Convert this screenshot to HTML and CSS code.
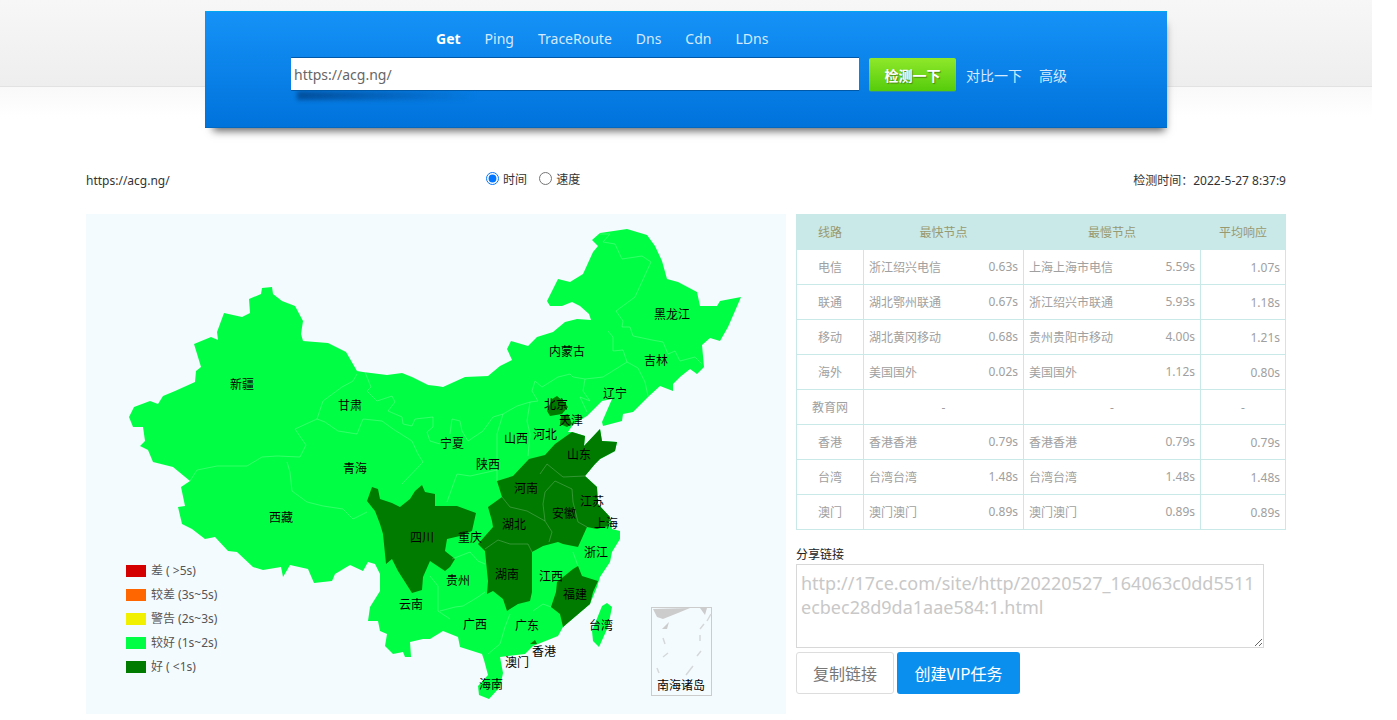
FILE: index.html

```html
<!DOCTYPE html>
<html lang="zh-CN">
<head>
  <meta charset="UTF-8" />
  <title>网站测速</title>
  <link rel="stylesheet" href="styles.css">
</head>
<body>
<div class="page">
  <div class="head">
    <div class="panel">
      <div class="nav">
        <a class="on">Get</a>
        <a>Ping</a>
        <a>TraceRoute</a>
        <a>Dns</a>
        <a>Cdn</a>
        <a>LDns</a>
      </div>
      <div class="search">
        <div class="url-box"><input class="url" type="text" value="https://acg.ng/"></div>
        <button class="go">检测一下</button>
        <a class="link first">对比一下</a>
        <a class="link">高级</a>
      </div>
    </div>
  </div>

  <div class="main">
    <div class="wrap">
      <div class="meta">
        <span class="site">https://acg.ng/</span>
        <div class="mode">
          <label><input type="radio" name="mode" checked> 时间</label>
          <label><input type="radio" name="mode"> 速度</label>
        </div>
        <span class="when">检测时间：2022-5-27 8:37:9</span>
      </div>

      <div class="cols">
        <div class="map">
          <svg class="china" viewBox="86 214 700 500" width="700" height="500">
            <!-- 整体轮廓 -->
            <path class="ok" d="M262 288 272 287 273 294 282 301 295 306 303 321 301 334 303 341 328 343 346 352 357 371 363 372 387 375 402 373 412 377 428 385 437 386 443 387 465 377 488 376 500 366 512 360 507 349 511 341 528 346 537 337 553 332 565 322 577 319 591 320 589 314 580 306 572 302 562 306 550 306 547 301 558 279 570 282 583 274 593 252 598 246 592 240 600 233 627 229 647 235 655 246 662 261 667 279 678 282 697 292 700 306 717 306 720 301 741 297 735 311 728 327 720 341 710 338 702 345 704 367 697 374 690 369 680 377 673 384 673 391 660 386 648 397 633 412 623 414 622 421 603 426 602 422 612 399 602 401 587 416 577 422 572 426 568 432 572 432 585 436 584 446 600 429 602 441 617 442 615 451 600 459 595 464 585 476 597 487 598 504 610 517 612 529 620 531 620 539 612 552 610 562 600 577 597 587 590 604 563 627 558 636 533 646 525 654 500 657 503 673 498 676 488 675 484 660 482 654 460 647 458 637 443 631 430 639 423 639 410 642 411 657 405 657 403 652 393 654 385 646 387 634 380 631 378 621 368 621 370 607 380 591 380 574 375 564 368 562 363 571 350 565 335 574 332 581 314 583 308 569 290 565 283 577 281 567 263 570 253 567 237 552 228 551 215 537 205 539 192 529 182 524 178 507 185 506 181 487 190 481 173 467 153 462 148 450 140 446 145 441 143 427 133 427 129 417 134 407 150 401 158 404 163 396 175 391 195 382 196 371 201 367 194 344 211 337 218 340 217 332 224 313 242 317 250 313 249 299 261 294Z"/>
            <path class="ok" d="M478 686 488 675 503 673 500 687 489 699 479 695Z"/>
            <path class="ok" d="M592 631 602 606 607 603 612 607 608 627 599 647 593 641Z"/>
            <!-- <1s 的省份 -->
            <path class="good" d="M367 501 372 487 378 489 380 499 392 503 400 507 410 499 415 491 422 485 425 492 435 494 435 506 457 506 476 513 472 531 460 536 447 539 445 551 455 559 450 567 445 571 430 561 423 577 422 590 412 593 398 571 392 559 386 564 383 534 380 524 375 511Z"/>
            <path class="good" d="M529 459 545 455 555 444 572 432 585 436 584 446 600 429 602 441 617 442 615 451 600 459 595 464 585 476 597 487 598 504 610 517 608 526 597 529 587 527 578 547 563 544 558 542 543 546 532 552 532 592 530 601 518 604 507 611 503 599 493 591 487 594 488 581 485 551 478 544 493 527 492 521 488 507 502 497 497 481 513 476Z"/>
            <path class="good" d="M551 607 556 592 557 582 573 569 578 566 582 576 598 581 593 592 590 604 563 627 560 614Z"/>
            <path class="good" d="M547 411 552 399 557 396 563 401 568 407 562 414 550 416Z"/>
            <path class="good" d="M561 416 568 414 572 424 567 427 560 424Z"/>
            <path class="good" d="M530 644 535 640 537 644Z"/>
            <!-- 省界 -->
            <g class="lines">
              <polyline points="190,481 197,470 217,466 247,466 262,457 277,456 300,457 306,445 295,429 317,419 323,401 342,387 353,381 357,374"/>
              <polyline points="287,462 290,472 292,491 307,502 323,506 343,509 353,519 367,512"/>
              <polyline points="365,372 371,387 367,391 377,401 392,396 395,402 388,411 402,417 403,424 412,426 415,419 433,417 433,427 427,432 430,441 440,444"/>
              <polyline points="317,419 325,422 338,431 357,434 363,419 382,421 393,429 412,441 418,454 423,462 402,484"/>
              <polyline points="600,234 610,234 603,242 615,244 622,259 642,256 651,262 640,286 635,297 616,311 623,321 622,327"/>
              <polyline points="608,331 613,337 613,351 623,350 627,362 638,368 645,382 648,396"/>
              <polyline points="622,327 630,327 633,336 652,340 663,342 668,354 675,351 680,361 695,357 702,364"/>
              <polyline points="627,362 603,377 585,379 583,391 590,401 580,397 587,412"/>
              <polyline points="585,379 573,377 570,374 558,377 542,387 535,381 532,391 538,401 530,402 517,406 503,414 493,417 483,431 468,441 462,431 460,421 452,419 450,434"/>
              <polyline points="530,402 527,421 530,434 528,456"/>
              <polyline points="503,414 497,434 497,461 497,481"/>
              <polyline points="447,502 457,474 470,476 497,470"/>
              <polyline points="452,559 470,552 478,561 485,564"/>
              <polyline points="430,576 438,586 438,611 450,619"/>
              <polyline points="440,611 455,607 463,606 478,597 485,592"/>
              <polyline points="510,614 505,627 500,644 488,654"/>
              <polyline points="533,611 543,604 551,607"/>
              <polyline points="573,552 578,566"/>
              <polyline points="502,497 510,507 527,511 545,521 552,532 549,542"/>
              <polyline points="545,521 543,504 545,492 555,481 572,489 573,502 578,522 587,527"/>
              <polyline points="540,474 547,464 563,477 585,476"/>
              <polyline points="485,549 498,540 510,544 518,544 528,544 532,552"/>
            </g>
            <!-- 南海诸岛 -->
            <rect class="inset" x="651.5" y="607.5" width="60" height="88"/>
            <path class="isle" d="M653 609 690 608 678 613 663 619 657 617Z"/>
            <path class="isle" d="M700 608 707 608 705 615Z"/>
            <path class="isle" d="M662 629 669 622 667 629Z"/>
            <g class="dash">
              <line x1="707" y1="621" x2="711" y2="614"/>
              <line x1="700" y1="629" x2="704" y2="624"/>
              <line x1="700" y1="635" x2="700" y2="641"/>
              <line x1="697" y1="656" x2="701" y2="651"/>
              <line x1="686" y1="675" x2="693" y2="666"/>
              <line x1="663" y1="638" x2="665" y2="644"/>
              <line x1="663" y1="657" x2="668" y2="653"/>
              <line x1="657" y1="668" x2="659" y2="673"/>
            </g>
            <g class="names">
              <text x="242" y="389">新疆</text>
              <text x="350" y="410">甘肃</text>
              <text x="355" y="473">青海</text>
              <text x="281" y="522">西藏</text>
              <text x="422" y="542">四川</text>
              <text x="411" y="609">云南</text>
              <text x="672" y="319">黑龙江</text>
              <text x="567" y="356">内蒙古</text>
              <text x="656" y="365">吉林</text>
              <text x="615" y="398">辽宁</text>
              <text x="556" y="409">北京</text>
              <text x="571" y="425">天津</text>
              <text x="545" y="439">河北</text>
              <text x="516" y="443">山西</text>
              <text x="452" y="448">宁夏</text>
              <text x="488" y="469">陕西</text>
              <text x="579" y="459">山东</text>
              <text x="526" y="493">河南</text>
              <text x="592" y="506">江苏</text>
              <text x="564" y="518">安徽</text>
              <text x="514" y="529">湖北</text>
              <text x="606" y="528">上海</text>
              <text x="470" y="542">重庆</text>
              <text x="596" y="557">浙江</text>
              <text x="507" y="579">湖南</text>
              <text x="551" y="581">江西</text>
              <text x="458" y="585">贵州</text>
              <text x="575" y="599">福建</text>
              <text x="601" y="630">台湾</text>
              <text x="475" y="629">广西</text>
              <text x="527" y="630">广东</text>
              <text x="544" y="656">香港</text>
              <text x="517" y="667">澳门</text>
              <text x="491" y="689">海南</text>
              <text x="681" y="690">南海诸岛</text>
            </g>
          </svg>
          <ul class="legend">
            <li><i class="c1"></i>差 ( &gt;5s)</li>
            <li><i class="c2"></i>较差 (3s~5s)</li>
            <li><i class="c3"></i>警告 (2s~3s)</li>
            <li><i class="c4"></i>较好 (1s~2s)</li>
            <li><i class="c5"></i>好 ( &lt;1s)</li>
          </ul>
        </div>

        <div class="side">
          <table class="stat">
            <colgroup><col class="w1"><col class="w2"><col class="w3"><col class="w4"></colgroup>
            <thead>
              <tr><th>线路</th><th>最快节点</th><th>最慢节点</th><th>平均响应</th></tr>
            </thead>
            <tbody>
              <tr><td class="mid">电信</td><td><div class="node"><span>浙江绍兴电信</span><span>0.63s</span></div></td><td><div class="node"><span>上海上海市电信</span><span>5.59s</span></div></td><td class="avg">1.07s</td></tr>
              <tr><td class="mid">联通</td><td><div class="node"><span>湖北鄂州联通</span><span>0.67s</span></div></td><td><div class="node"><span>浙江绍兴市联通</span><span>5.93s</span></div></td><td class="avg">1.18s</td></tr>
              <tr><td class="mid">移动</td><td><div class="node"><span>湖北黄冈移动</span><span>0.68s</span></div></td><td><div class="node"><span>贵州贵阳市移动</span><span>4.00s</span></div></td><td class="avg">1.21s</td></tr>
              <tr><td class="mid">海外</td><td><div class="node"><span>美国国外</span><span>0.02s</span></div></td><td><div class="node"><span>美国国外</span><span>1.12s</span></div></td><td class="avg">0.80s</td></tr>
              <tr><td class="mid">教育网</td><td class="mid">-</td><td class="mid">-</td><td class="mid">-</td></tr>
              <tr><td class="mid">香港</td><td><div class="node"><span>香港香港</span><span>0.79s</span></div></td><td><div class="node"><span>香港香港</span><span>0.79s</span></div></td><td class="avg">0.79s</td></tr>
              <tr><td class="mid">台湾</td><td><div class="node"><span>台湾台湾</span><span>1.48s</span></div></td><td><div class="node"><span>台湾台湾</span><span>1.48s</span></div></td><td class="avg">1.48s</td></tr>
              <tr><td class="mid">澳门</td><td><div class="node"><span>澳门澳门</span><span>0.89s</span></div></td><td><div class="node"><span>澳门澳门</span><span>0.89s</span></div></td><td class="avg">0.89s</td></tr>
            </tbody>
          </table>

          <div class="share-title">分享链接</div>
          <textarea class="share" readonly>http://17ce.com/site/http/20220527_164063c0dd5511ecbec28d9da1aae584:1.html</textarea>
          <div class="btns">
            <button class="btn plain">复制链接</button>
            <button class="btn blue">创建VIP任务</button>
          </div>
        </div>
      </div>
    </div>
  </div>
</div>
</body>
</html>
```

FILE: styles.css

```css
html, body { margin: 0; padding: 0; background: #fff; }
body { font-family: "Noto Sans", "Noto Sans CJK SC", sans-serif; font-size: 12px; color: #333; }
.page { width: 1372px; }

.head { height: 86px; border-bottom: 1px solid #e2e2e2; background: linear-gradient(#f7f7f7, #eeeeee); padding-top: 11px; box-sizing: content-box; height: 75px; }
.panel { width: 962px; height: 117px; margin: 0 auto; box-sizing: border-box; border-top: 1px solid #00a8f0; border-bottom: 1px solid #0068c0; background: linear-gradient(#1592f7, #0073db); box-shadow: 3px 8px 8px -5px #666; position: relative; }
.nav { display: flex; gap: 24px; padding: 17px 0 0 231px; height: 19px; font-size: 14px; line-height: 19px; color: #d5eaff; }
.nav .on { color: #fff; font-weight: bold; }
.search { display: flex; align-items: flex-start; margin: 9px 0 0 86px; }
.url-box { position: relative; }
.url-box::after { content: ""; position: absolute; left: 6px; top: 100%; width: 180px; height: 9px; background: linear-gradient(90deg, rgba(0,50,110,.6), rgba(0,60,130,0)); filter: blur(2px); }
.url { display: block; width: 568px; height: 34px; box-sizing: border-box; padding: 0 3px; border: 0; border-top: 1px solid #0058a8; border-bottom: 1px solid #0058a8; outline: 0; font: 14px "Noto Sans", sans-serif; color: #666; background: #fff; position: relative; z-index: 1; }
.go { width: 87px; height: 34px; margin: 1px 0 0 10px; padding: 0; border: 0; border-radius: 2px; border-bottom: 1px solid #2f8fa0; background: linear-gradient(#8fe82a, #55cc0b); color: #fff; font: bold 14px "Noto Sans CJK SC", sans-serif; text-shadow: 1px 1px 1px #4a8a10; }
.link { color: #d5eaff; font-size: 14px; line-height: 36px; font-family: "Noto Sans CJK SC", sans-serif; margin-left: 17px; }
.link.first { margin-left: 10px; }

.main { background: linear-gradient(#f9f9f9, #fff 30px) no-repeat; padding-top: 83px; }
.wrap { width: 1200px; margin: 0 auto; }
.meta { display: flex; justify-content: space-between; align-items: center; height: 20px; margin-bottom: 24px; position: relative; }
.mode { position: absolute; left: 397px; top: 0; display: flex; gap: 9px; line-height: 20px; }
.mode input { margin: 0 1px 0 3px; vertical-align: -1px; }

.cols { display: flex; gap: 10px; }
.map { position: relative; width: 700px; height: 500px; background: #f4fbff; flex: none; }
.china { display: block; }
.ok { fill: #00ff44; }
.good { fill: #007b00; }
.lines polyline { fill: none; stroke: rgba(255,255,255,.2); stroke-width: 1; }
.inset { fill: #f4fbff; stroke: #ccc; }
.isle { fill: #ccc; }
.dash line { stroke: #d4d8d8; stroke-width: 1.5; }
.names text { font-size: 12px; fill: #000; text-anchor: middle; font-family: "Noto Sans CJK SC", sans-serif; }

.legend { position: absolute; left: 40px; top: 347px; margin: 0; padding: 0; list-style: none; color: #555; }
.legend li { display: flex; height: 24px; line-height: 20px; }
.legend i { width: 20px; height: 12px; margin: 4px 5px 0 0; }
.c1 { background: #d40000; }
.c2 { background: #ff6600; }
.c3 { background: #f0f000; }
.c4 { background: #00ff44; }
.c5 { background: #007b00; }

.side { width: 489px; flex: none; }
.stat { width: 489px; border-collapse: collapse; table-layout: fixed; color: #a0a0a0; }
.w1 { width: 67px; }
.w2 { width: 160px; }
.w3 { width: 177px; }
.w4 { width: 85px; }
.stat th { height: 34px; padding: 0; background: #c9e8e8; font-weight: normal; color: #99996f; border: 1px solid #c9e8e8; }
.stat td { height: 34px; padding: 0 5px; border: 1px solid #c9e8e8; }
.mid { text-align: center; }
.avg { text-align: right; }
.node { display: flex; justify-content: space-between; }

.share-title { margin-top: 17px; line-height: 16px; color: #222; }
.share { display: block; width: 468px; height: 84px; box-sizing: border-box; padding: 6px 4px; border: 1px solid #d8d8d8; margin: 1px 0 4px; font: 18px/24px "Noto Sans", sans-serif; color: #c8c8c8; outline: 0; }
.btns { display: flex; gap: 3px; }
.btn { height: 42px; border-radius: 3px; font: 16px "Noto Sans CJK SC", sans-serif; padding: 0; }
.plain { width: 98px; background: #fff; border: 1px solid #ddd; color: #777; }
.blue { width: 123px; background: #0a8fee; border: 0; color: #fff; }
</style>
```
